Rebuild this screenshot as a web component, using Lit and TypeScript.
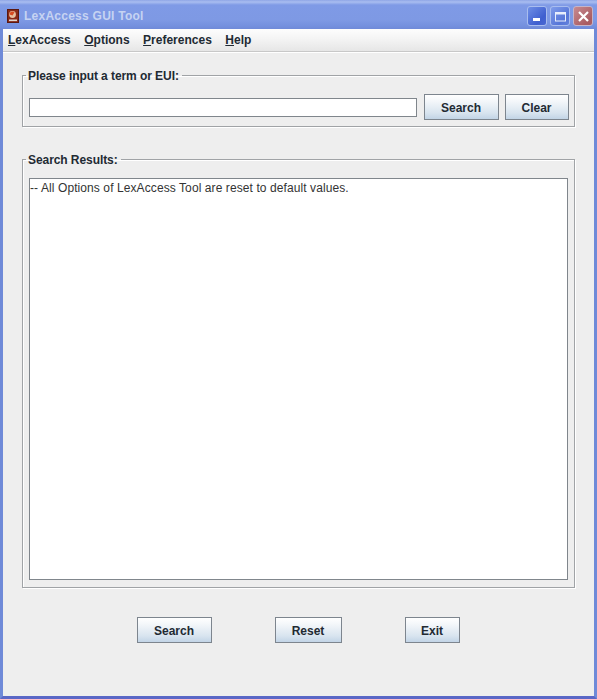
import { LitElement, html, css } from "lit";
import { customElement } from "lit/decorators.js";

@customElement("app-root")
export class AppRoot extends LitElement {
  static styles = css`
    :host {
      display: flex;
      flex-direction: column;
      width: 597px;
      height: 699px;
      overflow: hidden;
      font-family: "Liberation Sans", Arial, sans-serif;
      background: #eeeeee;
      color: #222a33;
    }
    .titlebar {
      height: 29px;
      flex: none;
      box-sizing: border-box;
      display: flex;
      align-items: center;
      padding: 0 4px 0 7px;
      background: linear-gradient(180deg, #8fa6e6 0, #a9bdf0 2px, #7f9ae6 5px, #7e99e4 20px, #7490de 26px, #6f8ad8 29px);
    }
    .appicon { flex: none; margin-right: 5px; margin-top: 2px; }
    .title {
      flex: 1;
      font-size: 12px;
      font-weight: 700;
      letter-spacing: 0.25px;
      color: #c6d3f2;
      margin-top: 3px;
    }
    .winbtns { display: flex; gap: 3px; margin-top: 3px; }
    .winbtn {
      width: 20px;
      height: 20px;
      box-sizing: border-box;
      border: 1px solid #a9bdee;
      border-radius: 3px;
      display: flex;
      align-items: center;
      justify-content: center;
    }
    .min { background: linear-gradient(135deg, #6f8fe6, #3f5fcf 70%, #4a68d2); }
    .max { background: linear-gradient(135deg, #7f9cea, #5676d8 70%, #6482dc); }
    .close { background: linear-gradient(135deg, #c78a90, #a95c62 80%); border-color: #c4b4c8; }
    .frame {
      flex: 1;
      min-height: 0;
      display: flex;
      flex-direction: column;
      border-left: 3px solid #6f8ad8;
      border-right: 3px solid #6f8ad8;
      border-bottom: 3px solid #5a67c6;
      background: #eeeeee;
    }
    .menubar {
      height: 23px;
      flex: none;
      box-sizing: border-box;
      display: flex;
      align-items: center;
      gap: 13.5px;
      padding: 0 0 1px 5px;
      background: linear-gradient(180deg, #fdfdfd, #f4f4f4 45%, #e6e6e6);
      border-bottom: 1px solid #c8c8c8;
      box-shadow: 0 1px 0 #fff;
      font-size: 12px;
      font-weight: 700;
    }
    .content {
      flex: 1;
      min-height: 0;
      display: flex;
      flex-direction: column;
      padding: 15px 19px 0;
    }
    fieldset {
      margin: 0;
      min-width: 0;
      border: 1px solid #a0a3a6;
      box-shadow: 1px 1px 0 #fff, inset 1px 1px 0 #fff;
      padding: 0;
      box-sizing: border-box;
    }
    legend {
      margin-left: 3px;
      padding: 2px 3px 0 2px;
      font-size: 12px;
      font-weight: 700;
      line-height: 15px;
      letter-spacing: -0.07px;
    }
    .input-set { height: 60px; flex: none; }
    .input-row {
      display: flex;
      align-items: center;
      padding: 10px 5px 0 6px;
    }
    .field {
      width: 388px;
      height: 19px;
      box-sizing: border-box;
      flex: none;
      background: #fff;
      border: 1px solid #80868c;
      margin-right: 7px;
    }
    button {
      height: 26px;
      box-sizing: border-box;
      padding: 1px 1px 0 0;
      border: 1px solid #7d858e;
      background: linear-gradient(180deg, #ffffff 0, #f4f7fa 25%, #d8e4ef 75%, #c2d4e6 100%);
      font: 700 12px "Liberation Sans", Arial, sans-serif;
      color: #222a33;
      flex: none;
    }
    .w75 { width: 75px; }
    .w64 { width: 64px; margin-left: 6px; }
    .w67 { width: 67px; }
    .w55 { width: 55px; }
    .results-set { height: 437px; flex: none; margin-top: 24px; }
    .results {
      margin: 10px 6px 0;
      height: 402px;
      box-sizing: border-box;
      background: #fff;
      border: 1px solid #80868c;
      padding: 2px 0 0 0;
      font-size: 12px;
      line-height: 15px;
      letter-spacing: 0.09px;
      color: #333;
    }
    .actions {
      display: flex;
      padding: 29px 0 0 115px;
    }
    .actions .w67 { margin-left: 63px; }
    .actions .w55 { margin-left: 63px; }
  `;

  render() {
    return html`
      <div class="titlebar">
        <svg class="appicon" width="12" height="14" viewBox="0 0 12 14">
          <rect x="0.5" y="0.5" width="11" height="13" fill="#8a2a18" stroke="#5a1810"/>
          <circle cx="5.5" cy="5.5" r="3.4" fill="#e8c0a0"/>
          <path d="M2.5 5.5a3 3 0 0 1 5-2.3L5.5 6.5z" fill="#d84a20"/>
          <rect x="2" y="10.5" width="8" height="1.6" fill="#e0d8d0"/>
        </svg>
        <div class="title">LexAccess GUI Tool</div>
        <div class="winbtns">
          <div class="winbtn min">
            <svg width="13" height="13" viewBox="0 0 13 13"><rect x="2" y="8" width="7" height="3" fill="#fff"/></svg>
          </div>
          <div class="winbtn max">
            <svg width="13" height="13" viewBox="0 0 13 13"><rect x="1.5" y="2.5" width="10" height="8.5" fill="none" stroke="#e8eefc"/><rect x="1" y="2" width="11" height="2.5" fill="#e8eefc"/></svg>
          </div>
          <div class="winbtn close">
            <svg width="13" height="13" viewBox="0 0 13 13"><path d="M2 2l9 9M11 2l-9 9" stroke="#fff" stroke-width="2.2"/></svg>
          </div>
        </div>
      </div>
      <div class="frame">
        <div class="menubar">
          <span><u>L</u>exAccess</span>
          <span><u>O</u>ptions</span>
          <span><u>P</u>references</span>
          <span><u>H</u>elp</span>
        </div>
        <div class="content">
          <fieldset class="input-set">
            <legend>Please input a term or EUI:</legend>
            <div class="input-row">
              <div class="field"></div>
              <button class="w75">Search</button>
              <button class="w64">Clear</button>
            </div>
          </fieldset>
          <fieldset class="results-set">
            <legend>Search Results:</legend>
            <div class="results">-- All Options of LexAccess Tool are reset to default values.</div>
          </fieldset>
          <div class="actions">
            <button class="w75">Search</button>
            <button class="w67">Reset</button>
            <button class="w55">Exit</button>
          </div>
        </div>
      </div>
    `;
  }
}
